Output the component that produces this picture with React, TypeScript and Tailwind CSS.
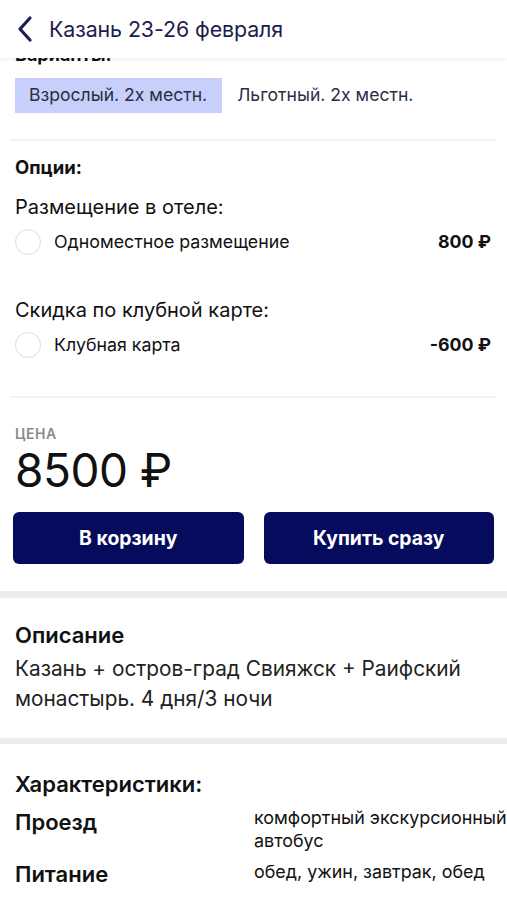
import React, { useState } from 'react';

const OPTIONS = [
  { group: 'Размещение в отеле:', label: 'Одноместное размещение', price: '800 ₽' },
  { group: 'Скидка по клубной карте:', label: 'Клубная карта', price: '-600 ₽' },
];

const VARIANTS = ['Взрослый. 2х местн.', 'Льготный. 2х местн.'];

const ChevronLeft: React.FC = () => (
  <svg width="18" height="28" viewBox="0 0 18 28" fill="none">
    <path d="M14 3 L4 14 L14 25" stroke="#1b1d4f" strokeWidth="3.2" strokeLinecap="round" strokeLinejoin="round" />
  </svg>
);

const App: React.FC = () => {
  const [variant, setVariant] = useState(0);
  const [checked, setChecked] = useState<boolean[]>([false, false]);

  return (
    <div className="min-h-[900px] bg-white text-[#111] overflow-hidden" style={{ fontFamily: 'Inter, "Noto Sans", sans-serif' }}>
      <header className="relative z-10 h-[58px] bg-white flex items-center gap-[15px] pl-[16px] shadow-[0_2px_4px_rgba(0,0,0,0.06)]">
        <ChevronLeft />
        <h1 className="text-[21.4px] text-[#1b1d4f] tracking-[-0.1px]">Казань 23-26 февраля</h1>
      </header>

      <section className="-mt-[14px] px-[15px]">
        <div className="text-[18px] font-bold leading-[22px]">Варианты:</div>
        <div className="flex gap-[15px] mt-[12px]">
          {VARIANTS.map((v, i) => (
            <button
              key={v}
              onClick={() => setVariant(i)}
              className={`h-[35px] text-[17.6px] text-[#2a2e42] ${i === variant ? 'bg-[#c8cffa] pl-[14px] pr-[15px]' : 'bg-transparent px-0'}`}
            >
              {v}
            </button>
          ))}
        </div>
      </section>

      <div className="mx-[10px] mt-[26px] h-[2px] bg-[#f3f3f3]" />

      <section className="px-[15px] pt-[14px]">
        <div className="text-[18.5px] font-bold leading-[24px]">Опции:</div>
        {OPTIONS.map((o, i) => (
          <div key={o.label} className={i === 0 ? 'mt-[16px]' : 'mt-[42px]'}>
            <div className="text-[20px] leading-[24px]">{o.group}</div>
            <label className="flex items-center mt-[10px] cursor-pointer">
              <input
                type="checkbox"
                className="hidden"
                checked={checked[i]}
                onChange={() => setChecked(checked.map((c, j) => (j === i ? !c : c)))}
              />
              <span className={`w-[26px] h-[26px] rounded-full border-[1.5px] ${checked[i] ? 'border-[#070b5e] bg-[#070b5e]' : 'border-[#dcdcdc]'}`} />
              <span className="ml-[13px] text-[17.8px] flex-1">{o.label}</span>
              <span className="text-[17.8px] font-bold pr-[1px]">{o.price}</span>
            </label>
          </div>
        ))}
      </section>

      <div className="mx-[10px] mt-[38px] h-[2px] bg-[#f3f3f3]" />

      <section className="px-[15px] pt-[28px]">
        <div className="text-[14px] font-semibold text-[#8a8a8a] tracking-[0.5px] leading-[16px]">ЦЕНА</div>
        <div className="text-[46px] leading-[56px] tracking-[-0.5px]">8500 ₽</div>
        <div className="flex gap-[20px] mt-[14px] -mx-[2px]">
          <button className="flex-1 h-[52px] rounded-[6px] bg-[#070b5e] text-white text-[19.4px] font-bold">В корзину</button>
          <button className="flex-1 h-[52px] rounded-[6px] bg-[#070b5e] text-white text-[19.4px] font-bold">Купить сразу</button>
        </div>
      </section>

      <div className="mt-[27px] h-[7px] bg-[#ececec]" />

      <section className="px-[15px] pt-[23px] pb-[24px]">
        <h2 className="text-[22px] font-semibold leading-[28px]">Описание</h2>
        <p className="text-[20.8px] leading-[30px] mt-[5px] text-[#222]">
          Казань + остров-град Свияжск + Раифский монастырь. 4 дня/3 ночи
        </p>
      </section>

      <div className="h-[6px] bg-[#ececec]" />

      <section className="px-[15px] pt-[26px]">
        <h2 className="text-[22px] font-semibold leading-[28px]">Характеристики:</h2>
        <div className="grid grid-cols-[239px_1fr] gap-y-[8px] mt-[8px] -mr-[15px]">
          <div className="text-[22px] font-semibold leading-[28px] mt-[2px]">Проезд</div>
          <div className="text-[17.9px] leading-[23px]">комфортный экскурсионный автобус</div>
          <div className="text-[22px] font-semibold leading-[28px]">Питание</div>
          <div className="text-[17.9px] leading-[23px]">обед, ужин, завтрак, обед</div>
        </div>
      </section>
    </div>
  );
};

export default App;
